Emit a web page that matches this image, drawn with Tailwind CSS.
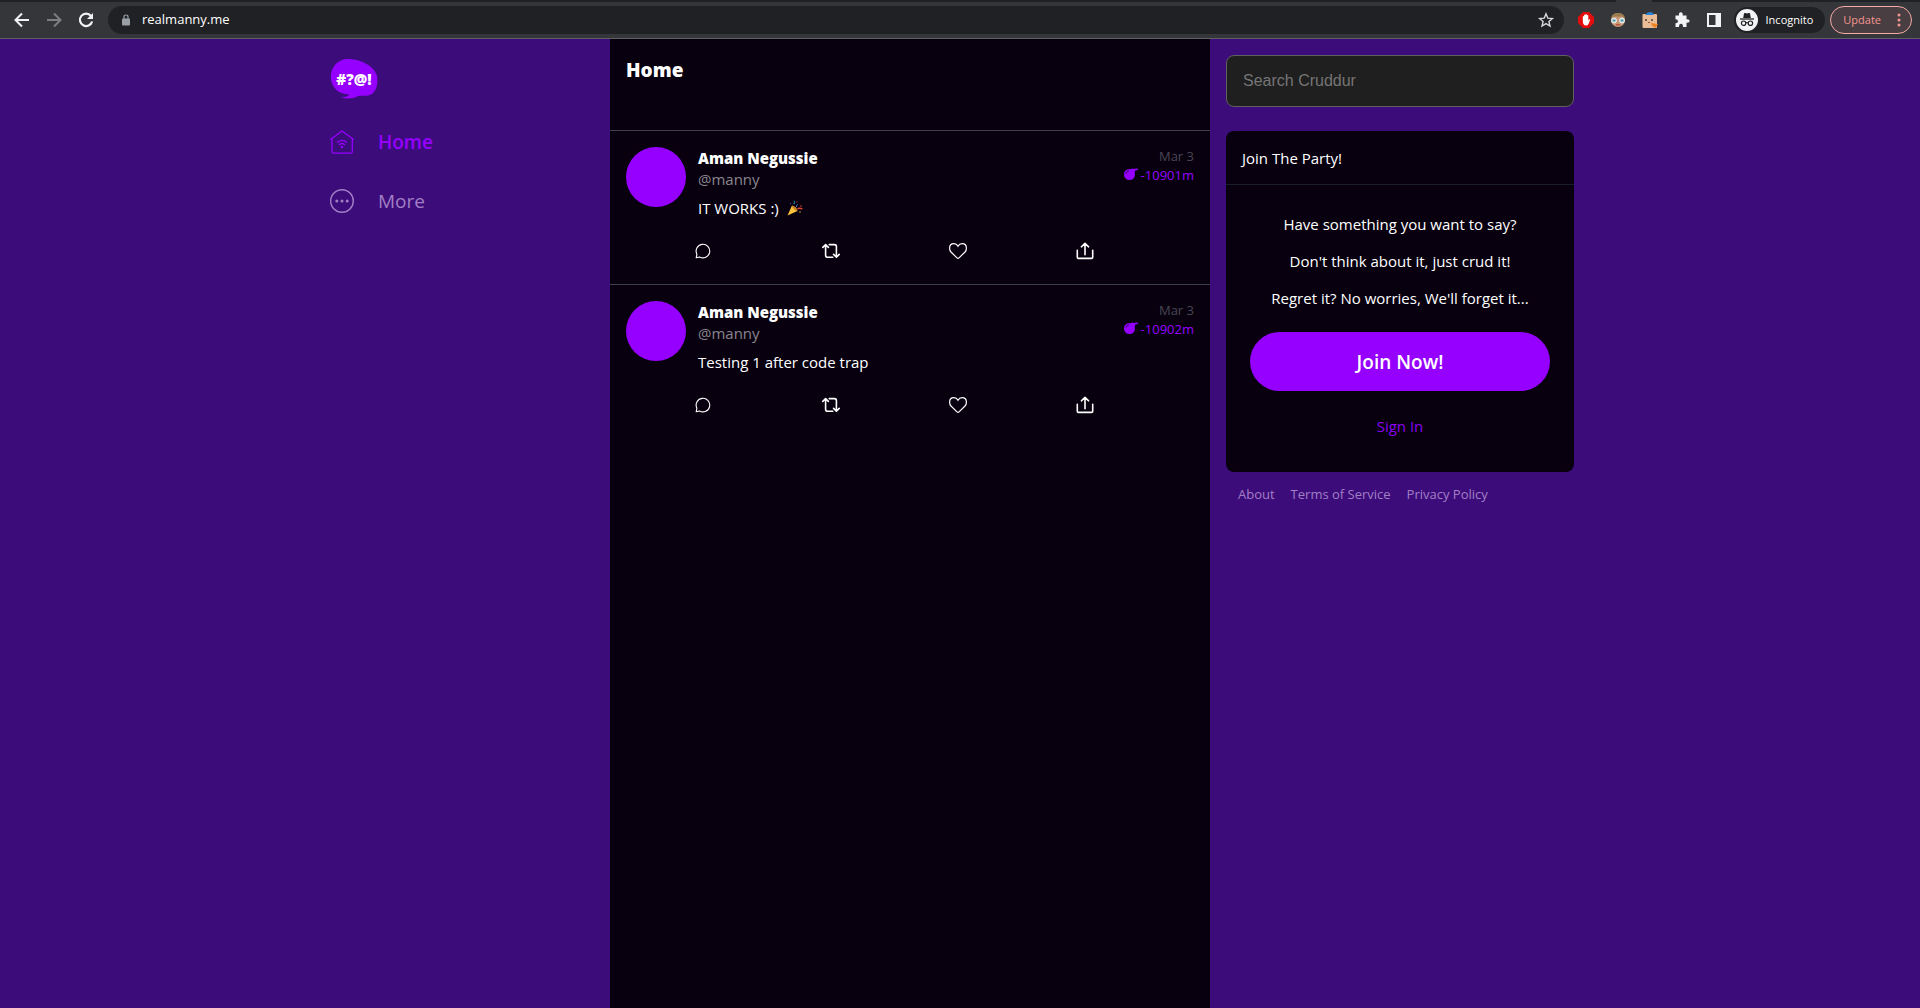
<!DOCTYPE html>
<html lang="en">
<head>
<meta charset="utf-8">
<title>Cruddur</title>
<meta name="viewport" content="width=device-width, initial-scale=1">
<script src="https://cdn.jsdelivr.net/npm/@tailwindcss/browser@4"></script>
</head>
<body class="min-h-screen flex flex-col bg-[#3d0c7b] text-white text-[15px] leading-5 font-['Open_Sans',sans-serif]">

<!-- Icons shared by the posts -->
<svg class="hidden" aria-hidden="true">
  <symbol id="reply" viewBox="0 0 16 16"><path d="M1.2 14.8 1.9 11.2A6.8 6.8 0 1 1 4.6 14Z" fill="none" stroke="#fff" stroke-width="1.1" stroke-linejoin="round"/></symbol>
  <symbol id="repost" viewBox="0 0 18 16"><path d="M.8 4.4 3.6 1.6 6.4 4.4M3.6 1.8V12.2Q3.6 14.2 5.6 14.2H10.8M7.2 1.6H12.4Q14.4 1.6 14.4 3.6V14M11.6 11.4 14.4 14.2 17.2 11.4" fill="none" stroke="#fff" stroke-width="1.6" stroke-linecap="round" stroke-linejoin="round"/></symbol>
  <symbol id="heart" viewBox="0 0 18 16"><path d="M9 15.4Q8.5 15.4 8 14.9L2 9Q.6 7.4.6 5.2C.6 2.6 2.4.7 4.9.7 6.8.7 8.2 1.8 9 3.3 9.800 1.8 11.200.7 13.100.7 15.600.7 17.400 2.600 17.400 5.200Q17.400 7.400 16 9L10 14.900Q9.500 15.400 9 15.400Z" fill="none" stroke="#fff" stroke-width="1.2"/></symbol>
  <symbol id="share" viewBox="0 0 18 18"><path d="M1.300 8.200V15.200Q1.300 16.400 2.500 16.400H15.500Q16.700 16.400 16.700 15.200V8.200M9 12.800V1.800M5.400 4.800 9 1.400 12.600 4.800" fill="none" stroke="#fff" stroke-width="1.600" stroke-linecap="round" stroke-linejoin="round"/></symbol>
  <symbol id="bomb" viewBox="0 0 14 12"><circle cx="5.500" cy="6.500" r="5.500" fill="#9500ff"/><path d="M6 1.600 8.500 .4 10.200 1 12 .5 14 .8 13.600 2.200H11.600L11 3.600 10 5Z" fill="#9500ff"/><path d="M2 5.500Q2.600 3.200 5 2.800" fill="none" stroke="#08000f" stroke-width=".7"/></symbol>
</svg>

<!-- Browser toolbar -->
<div class="bg-[#35363a] border-b border-[#5f6063]">
  <div class="flex h-[2px]"><div class="grow bg-[#202124]"></div><div class="w-9"></div><div class="w-[268px] bg-[#202124]"></div></div>
  <div class="flex items-center h-9 pl-3 pr-2 text-xs">
    <button aria-label="Back" class="mr-3"><svg class="size-5" viewBox="0 0 20 20" fill="none" stroke="#f1f3f4" stroke-width="2"><path d="M17 10H4M10 3.500 3.500 10 10 16.500"/></svg></button>
    <button aria-label="Forward" class="mr-3"><svg class="size-5" viewBox="0 0 20 20" fill="none" stroke="#7d7e81" stroke-width="2"><path d="M3 10H16M10 3.500 16.500 10 10 16.500"/></svg></button>
    <button aria-label="Reload" class="mr-3"><svg class="size-5" viewBox="0 0 20 20"><path d="M15 6A6.200 6.200 0 1 0 16.100 11.500" fill="none" stroke="#f1f3f4" stroke-width="2.200"/><path d="M17 3V9H11Z" fill="#f1f3f4"/></svg></button>
    <div class="grow flex items-center h-7 rounded-full bg-[#202124] pl-[14px] pr-2">
      <svg class="w-2 h-3 mr-3" viewBox="0 0 8 12"><path d="M2 5V3Q2 1 4 1T6 3V5" fill="none" stroke="#9aa0a6" stroke-width="1.200"/><rect y="4.500" width="8" height="7" rx="1" fill="#9aa0a6"/></svg>
      <input aria-label="Address" value="realmanny.me" class="grow min-w-0 bg-transparent outline-none text-[13px]">
      <button aria-label="Bookmark"><svg class="size-5" viewBox="0 0 20 20"><path d="M10 3.800 11.800 8.100 16.400 8.500 12.900 11.500 14 16 10 13.600 6 16 7.100 11.500 3.600 8.500 8.200 8.100Z" fill="none" stroke="#d5d7da" stroke-width="1.400"/></svg></button>
    </div>
    <div class="flex items-center gap-4 ml-[14px] mr-3">
      <button aria-label="Ad blocker"><svg class="size-4" viewBox="0 0 16 16"><path d="M5 0H11L16 5V11L11 16H5L0 11V5Z" fill="#e40d0d"/><path d="M4.800 9V4.500Q5.500 3.700 6.100 4.500V3Q6.800 2.200 7.500 3V2.400Q8.200 1.600 8.900 2.400V3.300Q9.700 2.600 10.300 3.400V8.500L11.200 7.300Q12.200 7 12.200 7.800L10.500 12Q9.800 13.500 8 13.500 4.800 13.400 4.800 9Z" fill="#fff"/></svg></button>
      <button aria-label="Glasses extension"><svg class="size-4" viewBox="0 0 16 16"><circle cx="8" cy="8" r="7" fill="#c99673"/><path d="M1 6Q2 1 8 1T15 6L12 4.500H4Z" fill="#9b7b50"/><circle cx="4" cy="8.500" r="2.500" fill="#8fc5d0" stroke="#f4f4f4"/><circle cx="12" cy="8.500" r="2.500" fill="#8fc5d0" stroke="#f4f4f4"/><path d="M3.500 8.500H4.500M11.500 8.500H12.500" stroke="#35515a" stroke-width="1.200"/><path d="M6 12.800H10" stroke="#b33a32"/></svg></button>
      <button aria-label="Clipboard extension"><svg class="size-4" viewBox="0 0 16 16"><rect x=".5" y="2" width="14.500" height="14" rx="1" fill="#e9bd98"/><path d="M3 3Q5 0 8 0T12 3Z" fill="#2a84d8"/><path d="M4 7V9M10 7V9" stroke="#3b2c26" stroke-width="1.300"/><path d="M6 10.500H8" stroke="#a5543c"/><path d="M9 11 16 12 13.500 16 10 14Z" fill="#f08422"/></svg></button>
      <button aria-label="Extensions"><svg class="size-4" viewBox="0 0 16 16"><path d="M1.500 3.500H5Q4.600.3 6.800.3T8.700 3.500H12.500V7.200Q15.700 7 15.700 9T12.500 10.800V15H9Q9 11.800 7 11.800T5 15H1.500V11.200Q4 11 4 9.200T1.500 7.200Z" fill="#f1f3f4"/></svg></button>
      <button aria-label="Side panel"><svg class="size-4" viewBox="0 0 16 16"><rect x="2" y="2" width="12" height="12" fill="none" stroke="#f1f3f4" stroke-width="2"/><path d="M9.500 2H14V14H9.500Z" fill="#f1f3f4"/></svg></button>
    </div>
    <button class="flex items-center gap-2 h-[26px] rounded-full bg-[#202124] pl-[2px] pr-3 mr-[5px] text-[11px]">
      <svg class="size-[22px]" viewBox="0 0 22 22"><circle cx="11" cy="11" r="11" fill="#f1f3f4"/><path d="M7.200 9 8 4.500Q8.300 3.700 9.200 4L11 4.500 12.800 4Q13.700 3.700 14 4.500L14.800 9Z" fill="#202124"/><path d="M4 10H18" stroke="#202124" stroke-width="1.300"/><g fill="none" stroke="#202124" stroke-width="1.200"><circle cx="7.600" cy="14.200" r="2.200"/><circle cx="14.400" cy="14.200" r="2.200"/><path d="M9.800 14Q11 13 12.200 14"/></g></svg>
      Incognito
    </button>
    <button class="flex items-center gap-4 h-7 rounded-full border border-[#f5aaa5] bg-[#493f42] text-[#f5958f] pl-3 pr-[10px] text-[11px]">Update
      <svg class="w-1 h-4" viewBox="0 0 4 16" fill="#f5958f"><circle cx="2" cy="3" r="1.500"/><circle cx="2" cy="8" r="1.500"/><circle cx="2" cy="13" r="1.500"/></svg>
    </button>
  </div>
</div>

<div class="grow flex justify-center">
  <nav class="w-[300px] shrink-0 px-5 pt-5">
    <a href="#" aria-label="Cruddur" class="block">
      <svg class="w-12 h-10" viewBox="0 0 48 40"><path d="M1 20C0 8 8 0 18 0 29 0 44 6 47 17 48 24 47 31 42 35 36 38 31 36 28 37 23 40 16 40 11 38.500 16 38 18 37 19.500 35.500 7 35 2 28 1 20Z" fill="#9500ff"/><text x="24" y="26" text-anchor="middle" fill="#fff" font-family="Open Sans, sans-serif" font-size="15" font-weight="800">#?@!</text></svg>
    </a>
    <a href="#" class="flex items-center gap-6 mt-[27px] h-8 text-[19px] font-semibold text-[#9500ff]">
      <svg class="size-6" viewBox="0 0 24 24" fill="none" stroke="#9500ff" stroke-width="1.300" stroke-linecap="round" stroke-linejoin="round"><path d="M.8 9.300 12 .9 23.200 9.300M2 8.600V21.500Q2 23.200 3.700 23.200H20.600Q22.300 23.200 22.300 21.500V8.600M7.500 12.200Q12 8.600 16.500 12.200M9.400 14.500Q12 12.500 14.600 14.500"/><circle cx="12" cy="17" r=".6" fill="#9500ff"/></svg>
      Home
    </a>
    <a href="#" class="flex items-center gap-6 mt-[27px] h-8 text-[19px] text-[#a17fc5]">
      <svg class="size-6" viewBox="0 0 24 24"><circle cx="12" cy="12" r="11.300" fill="none" stroke="#a17fc5" stroke-width="1.400"/><g fill="#a17fc5"><circle cx="6.800" cy="12" r="1.500"/><circle cx="12" cy="12" r="1.500"/><circle cx="17.200" cy="12" r="1.500"/></g></svg>
      More
    </a>
  </nav>

  <main class="w-[600px] shrink-0 bg-[#08000f]">
    <h1 class="px-4 pt-4 h-[91px] text-[19px] leading-[30px] font-extrabold">Home</h1>

    <article class="h-[154px] border-t border-[#3d3f4b] p-4">
      <div class="flex gap-3">
        <div class="size-[60px] shrink-0 rounded-full bg-[#9500ff]"></div>
        <div class="grow">
          <h2 class="leading-[22px] font-extrabold">Aman Negussie</h2>
          <a href="#" class="block text-[#8a868e]">@manny</a>
          <p class="mt-[9px] flex items-center gap-2">IT WORKS :)
            <svg class="size-4" viewBox="0 0 16 16" role="img" aria-label="Party popper"><path d="M.5 15.500 5 5.500 10.500 11Z" fill="#fcc23c"/><path d="M5 5.500Q7.500 6 9 7.500T10.500 11Q8 10.500 6.700 9.100T5 5.500Z" fill="#c98323"/><path d="M6.500 4Q8.500 3 7 .8" stroke="#1d81a6" stroke-width="1.100" fill="none"/><path d="M10.500 9Q12 7.500 15.500 9" stroke="#e0453a" stroke-width="1.300" fill="none"/><path d="M9.500 7Q9 5 11 4.500" stroke="#3c64c8" stroke-width="1" fill="none"/><g fill="#e0453a"><circle cx="10" cy="2" r=".6"/><circle cx="14" cy="6" r=".8"/></g><circle cx="3.500" cy="3.500" r=".6" fill="#3c64c8"/><circle cx="13" cy="12" r=".7" fill="#fcc23c"/></svg>
          </p>
        </div>
        <div class="text-right text-[13px] leading-[19px] shrink-0">
          <time class="block text-[#494653]">Mar 3</time>
          <div class="flex text-[#9500ff]"><svg class="w-[14px] h-3 mt-[2px] mr-[3px]"><use href="#bomb"/></svg>-10901m</div>
        </div>
      </div>
      <div class="grid grid-cols-4 w-[508px] ml-[69px] mt-6">
        <button aria-label="Reply" class="justify-self-start"><svg class="size-4"><use href="#reply"/></svg></button>
        <button aria-label="Repost" class="justify-self-start"><svg class="w-[18px] h-4"><use href="#repost"/></svg></button>
        <button aria-label="Like" class="justify-self-start"><svg class="w-[18px] h-4"><use href="#heart"/></svg></button>
        <button aria-label="Share" class="justify-self-start"><svg class="w-[18px] h-[18px]"><use href="#share"/></svg></button>
      </div>
    </article>

    <article class="h-[154px] border-t border-[#3d3f4b] p-4">
      <div class="flex gap-3">
        <div class="size-[60px] shrink-0 rounded-full bg-[#9500ff]"></div>
        <div class="grow">
          <h2 class="leading-[22px] font-extrabold">Aman Negussie</h2>
          <a href="#" class="block text-[#8a868e]">@manny</a>
          <p class="mt-[9px]">Testing 1 after code trap</p>
        </div>
        <div class="text-right text-[13px] leading-[19px] shrink-0">
          <time class="block text-[#494653]">Mar 3</time>
          <div class="flex text-[#9500ff]"><svg class="w-[14px] h-3 mt-[2px] mr-[3px]"><use href="#bomb"/></svg>-10902m</div>
        </div>
      </div>
      <div class="grid grid-cols-4 w-[508px] ml-[69px] mt-6">
        <button aria-label="Reply" class="justify-self-start"><svg class="size-4"><use href="#reply"/></svg></button>
        <button aria-label="Repost" class="justify-self-start"><svg class="w-[18px] h-4"><use href="#repost"/></svg></button>
        <button aria-label="Like" class="justify-self-start"><svg class="w-[18px] h-4"><use href="#heart"/></svg></button>
        <button aria-label="Share" class="justify-self-start"><svg class="w-[18px] h-[18px]"><use href="#share"/></svg></button>
      </div>
    </article>
  </main>

  <aside class="w-[400px] shrink-0 pl-4 pr-9 pt-4">
    <input type="search" aria-label="Search Cruddur" placeholder="Search Cruddur" class="block w-full h-[52px] px-4 rounded-lg border border-[#5f5f5f] bg-[#1f1f1f] text-base font-['Liberation_Sans',sans-serif] placeholder:text-[#757575]">
    <section class="mt-6 rounded-lg bg-[#08000f]">
      <h2 class="flex items-center px-4 h-[54px] border-b border-[#1a1f29]">Join The Party!</h2>
      <div class="px-6 pt-[29px] pb-9 flex flex-col text-center">
        <p>Have something you want to say?</p>
        <p class="mt-[17px]">Don't think about it, just crud it!</p>
        <p class="mt-[17px]">Regret it? No worries, We'll forget it...</p>
        <a href="#" class="mt-6 h-[59px] rounded-full bg-[#9500ff] flex items-center justify-center text-[19px] font-semibold">Join Now!</a>
        <a href="#" class="mt-[25px] text-[#8a00f0]">Sign In</a>
      </div>
    </section>
    <footer class="flex gap-4 px-3 pt-3 text-[13px] text-[#a17fc5]">
      <a href="#">About</a><a href="#">Terms of Service</a><a href="#">Privacy Policy</a>
    </footer>
  </aside>
</div>
</body>
</html>
